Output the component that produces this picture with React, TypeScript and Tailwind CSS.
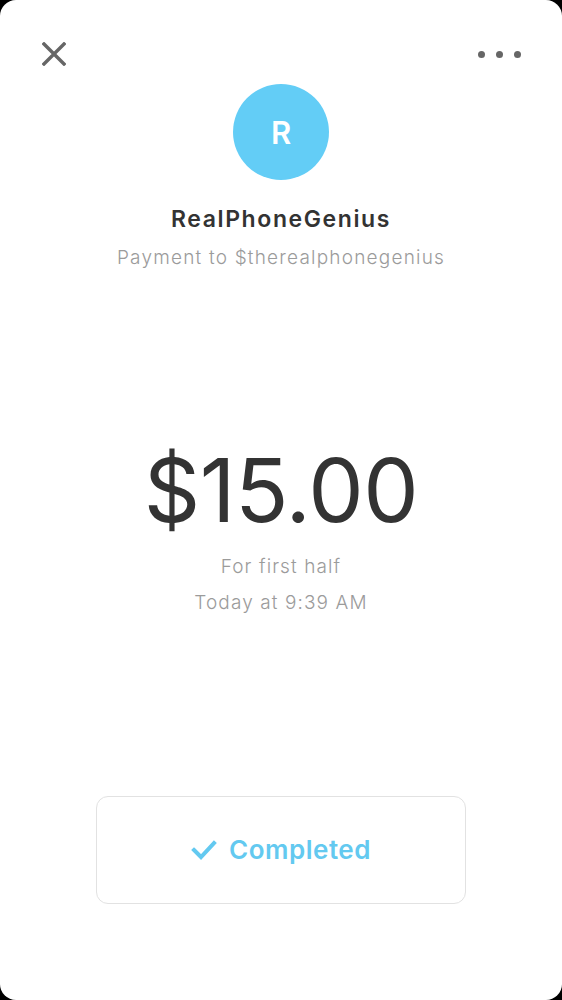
import React from "react";

export default function App() {
  return (
    <div className="w-[562px] h-[1000px] bg-black" style={{ fontFamily: "Inter, Lato, sans-serif" }}>
      <div className="w-full h-full bg-white rounded-[16px] flex flex-col items-center">
        <div className="w-full flex items-center justify-between px-[42px] pt-[42px] h-[66px]">
          <svg width="24" height="24" viewBox="0 0 24 24">
            <path d="M2 2 L22 22 M22 2 L2 22" stroke="#666" strokeWidth="3.4" strokeLinecap="square" />
          </svg>
          <div className="flex items-center gap-[11px] mr-[-1px]">
            <div className="w-[7px] h-[7px] rounded-full bg-[#666]" />
            <div className="w-[7px] h-[7px] rounded-full bg-[#666]" />
            <div className="w-[7px] h-[7px] rounded-full bg-[#666]" />
          </div>
        </div>
        <div className="mt-[18px] w-[96px] h-[96px] rounded-full bg-[#63cdf6] flex items-center justify-center">
          <span className="text-white font-semibold text-[31px] leading-none">R</span>
        </div>
        <div className="mt-[24px] text-[#333] font-semibold text-[23px] leading-[30px] tracking-[1.6px]">RealPhoneGenius</div>
        <div className="mt-[12px] text-[#9b9b9b] text-[19px] leading-[24px] font-light tracking-[1.2px]">Payment to $therealphonegenius</div>
        <div className="mt-[170px] text-[#333] text-[88px] leading-[100px] tracking-[-0.5px] font-normal">$15.00</div>
        <div className="mt-[15px] text-[#9b9b9b] text-[19px] leading-[24px] font-light tracking-[1.1px]">For first half</div>
        <div className="mt-[12px] text-[#9b9b9b] text-[19px] leading-[24px] font-light tracking-[1.1px]">Today at 9:39 AM</div>
        <div className="mt-[181px] w-[370px] h-[108px] border border-[#e2e2e2] rounded-[12px] flex items-center justify-center gap-[12px]">
          <svg width="26" height="20" viewBox="0 0 26 20">
            <path d="M3 10 L10 17 L23 3" stroke="#63c9f0" strokeWidth="4" fill="none" strokeLinecap="square" />
          </svg>
          <span className="text-[#63c9f0] font-semibold text-[26px] leading-none tracking-[0.5px]">Completed</span>
        </div>
      </div>
    </div>
  );
}
